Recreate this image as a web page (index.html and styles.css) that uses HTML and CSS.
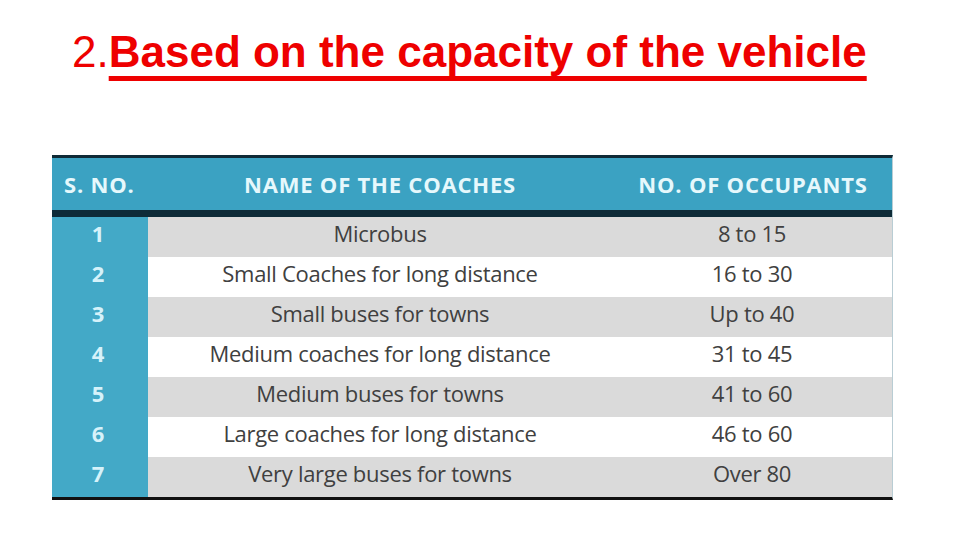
FILE: index.html
```html
<!DOCTYPE html>
<html>
<head>
<meta charset="utf-8">
<link rel="stylesheet" href="styles.css">
</head>
<body>
<div class="slide">
  <h1 class="title"><span class="num">2.</span><span class="main">Based on the capacity of the vehicle</span></h1>
  <div class="table">
    <div class="head">
      <div class="c1">S. NO.</div>
      <div class="c2">NAME OF THE COACHES</div>
      <div class="c3">NO. OF OCCUPANTS</div>
    </div>
    <div class="row gray"><div class="c1">1</div><div class="c2">Microbus</div><div class="c3">8 to 15</div></div>
    <div class="row"><div class="c1">2</div><div class="c2">Small Coaches for long distance</div><div class="c3">16 to 30</div></div>
    <div class="row gray"><div class="c1">3</div><div class="c2">Small buses for towns</div><div class="c3">Up to 40</div></div>
    <div class="row"><div class="c1">4</div><div class="c2">Medium coaches for long distance</div><div class="c3">31 to 45</div></div>
    <div class="row gray"><div class="c1">5</div><div class="c2">Medium buses for towns</div><div class="c3">41 to 60</div></div>
    <div class="row"><div class="c1">6</div><div class="c2">Large coaches for long distance</div><div class="c3">46 to 60</div></div>
    <div class="row gray"><div class="c1">7</div><div class="c2">Very large buses for towns</div><div class="c3">Over 80</div></div>
  </div>
</div>
</body>
</html>
```
FILE: styles.css
```css
* { box-sizing: border-box; }
html, body { margin: 0; padding: 0; background: #fff; }
.slide {
  width: 960px;
  height: 540px;
  padding: 26px 0 0 52px;
  font-family: "Liberation Sans", Arial, sans-serif;
}
.title {
  margin: 0 0 0 20px;
  height: 59px;
  font-size: 44px;
  line-height: 52px;
  color: #ee0000;
  font-weight: normal;
  white-space: nowrap;
}
.title .main {
  font-weight: bold;
  text-decoration: underline;
  text-decoration-thickness: 5px;
  text-underline-offset: 9px;
  text-decoration-skip-ink: none;
}
.table {
  margin-top: 70px;
  width: 841px;
  border-top: 3px solid #0f2a36;
  border-bottom: 3px solid #111;
  border-right: 1px solid #b9cdd4;
  font-family: "Open Sans", "Liberation Sans", sans-serif;
}
.head {
  display: grid;
  grid-template-columns: 96px 464px 1fr;
  height: 59px;
  padding-bottom: 1px;
  align-items: center;
  background: #3ba2c2;
  border-bottom: 7px solid #0e2b38;
  color: #e6f8fc;
  font-weight: bold;
  font-size: 22px;
  letter-spacing: 0.8px;
}
.head .c1 { padding-left: 12px; }
.head .c2, .head .c3 { text-align: center; }
.head .c3 { padding-left: 2px; }
.row {
  display: grid;
  grid-template-columns: 96px 464px 1fr;
  height: 40px;
  align-items: center;
  background: #fff;
  color: #404040;
  font-size: 22px;
  letter-spacing: -0.3px;
}
.row.gray { background: #dadada; }
.row .c1 {
  height: 100%;
  display: flex;
  align-items: center;
  justify-content: center;
  background: #43a9c7;
  color: #d6f2fa;
  font-weight: bold;
  padding: 0 4px 9px 0;
}
.row .c2, .row .c3 { text-align: center; padding-bottom: 9px; }
```
